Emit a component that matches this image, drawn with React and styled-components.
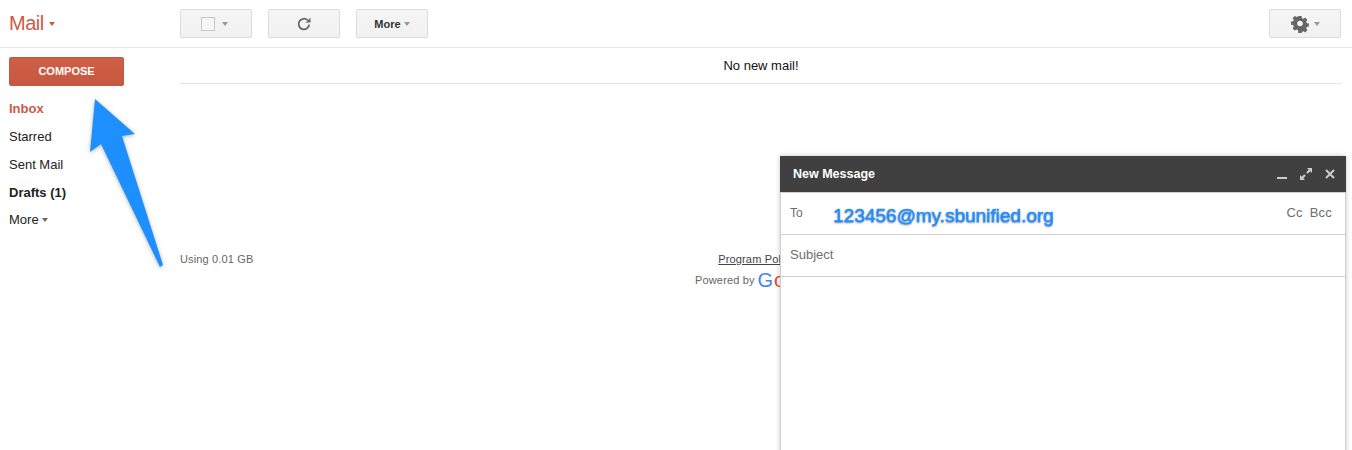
import React from 'react';
import styled, { createGlobalStyle } from 'styled-components';

const GlobalStyle = createGlobalStyle`
  html, body { margin: 0; padding: 0; background: #fff; }
  body { font-family: "Liberation Sans", Arial, sans-serif; overflow: hidden; }
`;

const Page = styled.div`
  position: relative;
  width: 1352px;
  height: 450px;
  overflow: hidden;
  background: #fff;
`;

// top bar
const TopBar = styled.header`
  display: flex;
  align-items: flex-start;
  height: 48px;
  box-sizing: border-box;
  border-bottom: 1px solid #e5e5e5;
  padding: 9px 11px 0 0;
`;

const MailMenu = styled.div`
  width: 180px;
  padding-left: 9px;
  box-sizing: border-box;
  display: flex;
  align-items: center;
  gap: 5px;
  height: 29px;
  color: #cc5a46;
  font-size: 20px;
  letter-spacing: -0.5px;
`;

const Caret = styled.span`
  display: inline-block;
  width: 0;
  height: 0;
  border-left: 3.5px solid transparent;
  border-right: 3.5px solid transparent;
  border-top: 4px solid ${p => p.$color || '#999'};
`;

const Tools = styled.div`
  display: flex;
  gap: 16px;
  flex: 1;
`;

const ToolButton = styled.div`
  width: 72px;
  height: 29px;
  box-sizing: border-box;
  display: flex;
  align-items: center;
  justify-content: center;
  gap: ${p => p.$gap ?? 3}px;
  padding-right: ${p => p.$shift || 0}px;
  border: 1px solid #dcdcdc;
  border-radius: 2px;
  background: linear-gradient(#f5f5f5, #f1f1f1);
  color: #333;
  font-size: 11px;
  font-weight: bold;
  margin-left: ${p => (p.$push ? 'auto' : '0')};
`;

const CheckBox = styled.span`
  width: 12px;
  height: 12px;
  border: 1px solid #c6c6c6;
  background: #f7f7f7;
`;

// body
const Body = styled.div`
  display: flex;
`;

const Sidebar = styled.nav`
  width: 180px;
  flex: none;
  box-sizing: border-box;
  padding: 9px 0 0 9px;
`;

const Compose = styled.div`
  width: 115px;
  height: 29px;
  box-sizing: border-box;
  display: flex;
  align-items: center;
  justify-content: center;
  padding-bottom: 2px;
  margin-bottom: 9px;
  border: 1px solid #bd5a45;
  border-radius: 2px;
  background: linear-gradient(#cf5f47, #c8573f);
  color: #fff;
  font-size: 11px;
  font-weight: bold;
`;

const NavItem = styled.div`
  height: 28px;
  line-height: 28px;
  font-size: 13px;
  color: ${p => p.$color || '#222'};
  font-weight: ${p => (p.$bold ? 'bold' : 'normal')};
  display: flex;
  align-items: center;
  gap: 3px;
  margin-top: ${p => p.$nudge || 0}px;
`;

const Main = styled.main`
  flex: 1;
  margin-right: 10px;
`;

const Notice = styled.div`
  height: 35px;
  line-height: 35px;
  border-bottom: 1px solid #e5e5e5;
  text-align: center;
  font-size: 13px;
  color: #111;
`;

const Footer = styled.footer`
  display: grid;
  grid-template-columns: 1fr auto 1fr;
  margin-top: 169px;
  font-size: 11px;
  letter-spacing: 0.15px;
  color: #666;
`;

const FooterCenter = styled.div`
  display: flex;
  flex-direction: column;
  align-items: center;
`;

const PolicyLink = styled.span`
  color: #444;
  text-decoration: underline;
`;

const PoweredBy = styled.div`
  display: flex;
  align-items: center;
  gap: 3px;
  height: 22px;
  margin-top: 4px;
`;

const GoogleWord = styled.span`
  font-size: 20px;
  line-height: 20px;
  letter-spacing: 0.8px;
`;

const Letter = styled.span`
  color: ${p => p.$color};
`;

// compose window, floats over the page
const ComposeWindow = styled.section`
  position: absolute;
  left: 780px;
  top: 156px;
  width: 566px;
  height: 320px;
  box-sizing: border-box;
  border-left: 1px solid #cfcfcf;
  border-right: 1px solid #cfcfcf;
  background: #fff;
  box-shadow: 0 0 5px rgba(0, 0, 0, 0.22);
`;

const WindowHead = styled.div`
  height: 37px;
  box-sizing: border-box;
  margin: 0 -1px;
  padding: 0 11px 0 13px;
  display: flex;
  align-items: center;
  justify-content: space-between;
  background: #404040;
  border-bottom: 1px solid #cfcfcf;
  color: #fff;
  font-size: 12.5px;
  font-weight: bold;
`;

const HeadIcons = styled.div`
  display: flex;
  align-items: center;
  gap: 13px;
`;

const Field = styled.div`
  height: 42px;
  box-sizing: border-box;
  border-bottom: 1px solid #cfcfcf;
  padding: ${p => p.$top || 0}px 13px 0 9px;
  display: flex;
  align-items: flex-start;
  font-size: 13px;
  color: #6e6e6e;
`;

const ToLabel = styled.span`
  width: 43px;
  font-size: 12px;
  margin-top: 13px;
`;

const Recipient = styled.span`
  flex: 1;
  margin-top: 12px;
  font-size: 19px;
  line-height: 22px;
  color: #1e8fff;
  text-shadow: 0 1px 2px rgba(0, 0, 0, 0.55), 0 0 1px #fff;
  -webkit-text-stroke: 0.5px #1e8fff;
`;

const CopyLinks = styled.span`
  display: flex;
  gap: 7px;
  margin-top: 12px;
  font-size: 13px;
  letter-spacing: 0.2px;
  color: #6e6e6e;
`;

const Arrow = styled.svg`
  position: absolute;
  left: 80px;
  top: 90px;
  filter: drop-shadow(0 1px 2px rgba(0, 0, 0, 0.3));
`;

const App = () => (
  <Page>
    <GlobalStyle />
    <TopBar>
      <MailMenu>
        Mail <Caret $color="#cc5a46" />
      </MailMenu>
      <Tools>
        <ToolButton $gap={7} $shift={3}>
          <CheckBox />
          <Caret />
        </ToolButton>
        <ToolButton>
          <svg width="16" height="16" viewBox="0 0 16 16" fill="none">
            <path d="M13.2 8.6A5.3 5.3 0 1 1 11.6 4.2" stroke="#666" strokeWidth="1.8" />
            <path d="M9.6 6.6h4.9V1.7z" fill="#666" />
          </svg>
        </ToolButton>
        <ToolButton>
          More <Caret />
        </ToolButton>
        <ToolButton $push $gap={5}>
          <svg width="18" height="18" viewBox="0 0 18 18">
            <path
              fill="#666"
              fillRule="evenodd"
              d="M7.4 1h3.2l.4 2.2 1.3.6 1.9-1.2 2.2 2.3-1.2 1.8.5 1.3 2.2.4v3.2l-2.2.4-.5 1.3 1.2 1.9-2.2 2.2-1.9-1.2-1.3.5-.4 2.1H7.4L7 14.9l-1.3-.5-1.9 1.2-2.2-2.2 1.2-1.9-.5-1.3L.1 9.800V6.600l2.200-.4.5-1.300L1.600 3.100 3.800.9l1.900 1.200L7 1.600zM9 5.700a2.800 2.800 0 1 0 0 5.600 2.800 2.800 0 0 0 0-5.600z"
            />
          </svg>
          <Caret />
        </ToolButton>
      </Tools>
    </TopBar>

    <Body>
      <Sidebar>
        <Compose>COMPOSE</Compose>
        <NavItem $color="#cc5a46" $bold>Inbox</NavItem>
        <NavItem>Starred</NavItem>
        <NavItem>Sent Mail</NavItem>
        <NavItem $bold>Drafts (1)</NavItem>
        <NavItem $nudge={-1}>
          More <Caret $color="#666" />
        </NavItem>
      </Sidebar>
      <Main>
        <Notice>No new mail!</Notice>
        <Footer>
          <span>Using 0.01 GB</span>
          <FooterCenter>
            <PolicyLink>Program Policies</PolicyLink>
            <PoweredBy>
              Powered by
              <GoogleWord>
                <Letter $color="#4285f4">G</Letter>
                <Letter $color="#ea4335">o</Letter>
                <Letter $color="#fbbc05">o</Letter>
                <Letter $color="#4285f4">g</Letter>
                <Letter $color="#34a853">l</Letter>
                <Letter $color="#ea4335">e</Letter>
              </GoogleWord>
            </PoweredBy>
          </FooterCenter>
          <span />
        </Footer>
      </Main>
    </Body>

    <ComposeWindow>
      <WindowHead>
        New Message
        <HeadIcons>
          <svg width="11" height="12" viewBox="0 0 11 12">
            <rect x="1" y="9" width="10" height="2" fill="#ccc" />
          </svg>
          <svg width="12" height="12" viewBox="0 0 12 12" fill="#ccc">
            <path d="M7 0h5v5L10.300 3.300 7.800 5.800 6.200 4.200 8.700 1.700zM5 12H0V7l1.700 1.700 2.500-2.500 1.600 1.600-2.500 2.500z" />
          </svg>
          <svg width="10" height="10" viewBox="0 0 10 10" stroke="#ccc" strokeWidth="2">
            <path d="M1 1l8 8M9 1l-8 8" />
          </svg>
        </HeadIcons>
      </WindowHead>
      <Field>
        <ToLabel>To</ToLabel>
        <Recipient>123456@my.sbunified.org</Recipient>
        <CopyLinks>
          <span>Cc</span>
          <span>Bcc</span>
        </CopyLinks>
      </Field>
      <Field $top={12}>Subject</Field>
    </ComposeWindow>

    <Arrow width="90" height="185" viewBox="80 90 90 185">
      <path d="M95 99L135 134L122 136L163 265L160 267L101 144L90 152Z" fill="#1e8fff" />
    </Arrow>
  </Page>
);

export default App;
